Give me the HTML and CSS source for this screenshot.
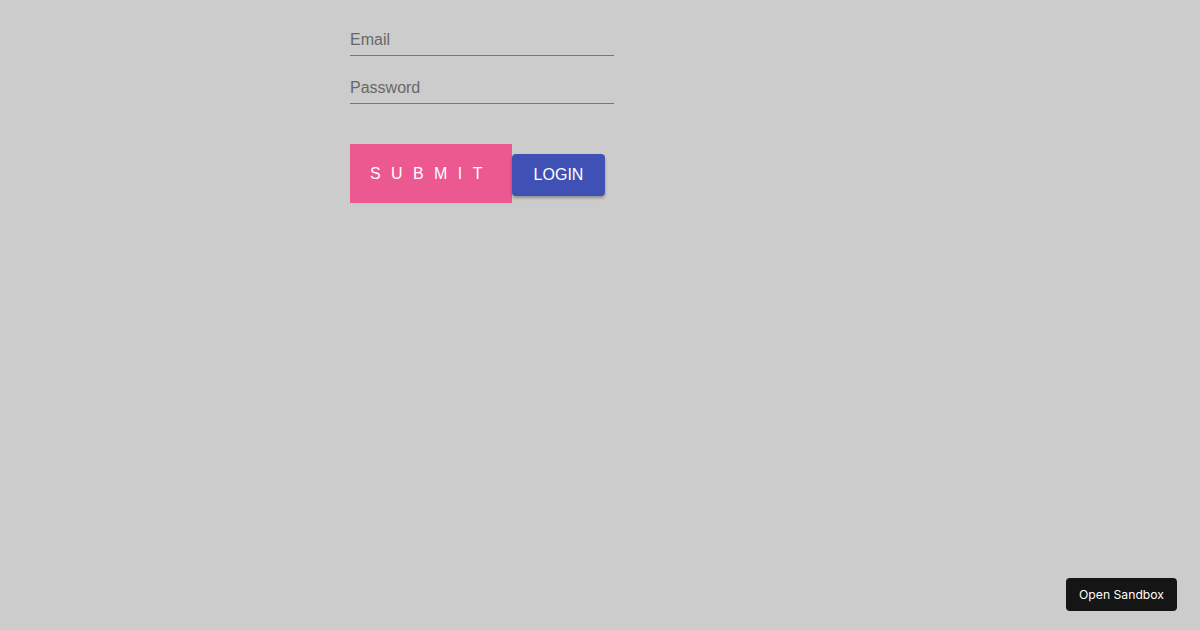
FILE: index.html
```html
<!DOCTYPE html>
<html>
<head>
<meta charset="utf-8">
<link rel="stylesheet" href="styles.css">
</head>
<body>
<div class="page">
  <form class="form">
    <div class="field"><input class="input" type="text" placeholder="Email"></div>
    <div class="field"><input class="input" type="password" placeholder="Password"></div>
    <div class="actions">
      <button type="button" class="submit">Submit</button>
      <button type="button" class="login">LOGIN</button>
    </div>
  </form>
</div>
<a class="sandbox">Open Sandbox</a>
</body>
</html>
```
FILE: styles.css
```css
html, body {
  margin: 0;
  padding: 0;
  background: #cccccc;
  height: 100%;
}
body {
  font-family: "Liberation Sans", Arial, sans-serif;
}
.page {
  width: 500px;
  margin: 0 auto;
  padding-top: 8px;
}
.form {
  display: flex;
  flex-direction: column;
}
.field {
  width: 264px;
  height: 48px;
  display: flex;
  align-items: flex-end;
}
.input {
  width: 100%;
  box-sizing: border-box;
  background: transparent;
  border: none;
  border-bottom: 1px solid #777777;
  font-family: "Liberation Sans", Arial, sans-serif;
  font-size: 16px;
  color: #555;
  padding: 6px 0 6px 0;
  margin: 0;
  outline: none;
}
.input::placeholder {
  color: #686868;
}
.actions {
  display: flex;
  align-items: center;
  margin-top: 40px;
}
.submit {
  background: #ec5990;
  color: #fff;
  border: none;
  text-transform: uppercase;
  font-family: "Liberation Sans", Arial, sans-serif;
  font-size: 16px;
  letter-spacing: 10.4px;
  width: 162px;
  height: 59px;
  padding: 0 0 0 20px;
  text-align: left;
  margin: 0;
}
.login {
  background: #3f51b5;
  color: #fff;
  border: none;
  border-radius: 4px;
  font-family: "Liberation Sans", Arial, sans-serif;
  font-size: 16px;
  width: 93px;
  height: 42px;
  padding: 0;
  margin: 3px 0 0 0;
  box-shadow: 0 2px 3px rgba(0,0,0,0.3);
}
.sandbox {
  position: fixed;
  right: 23px;
  bottom: 19px;
  width: 111px;
  height: 33px;
  box-sizing: border-box;
  background: #151515;
  color: #fff;
  border-radius: 4px;
  font-family: Inter, "Liberation Sans", sans-serif;
  font-size: 12.2px;
  display: flex;
  align-items: center;
  justify-content: center;
}
```
